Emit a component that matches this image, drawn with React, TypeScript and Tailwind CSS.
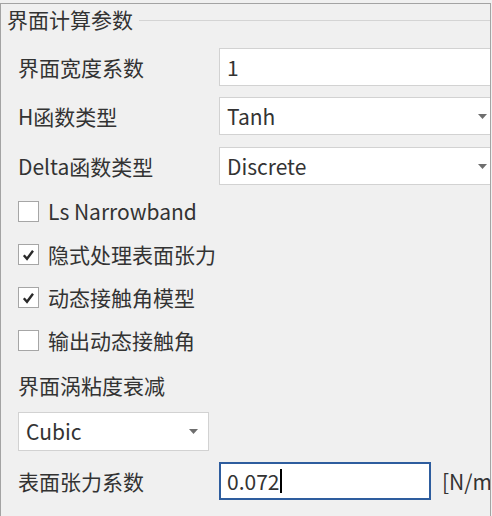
import React from "react";

const font = { fontFamily: '"Noto Sans CJK SC", "Noto Sans", sans-serif' };

function Arrow() {
  return (
    <svg width="9" height="5" viewBox="0 0 9 5" className="shrink-0">
      <path d="M0 0 L9 0 L4.5 5 Z" fill="#6e6e6e" />
    </svg>
  );
}

function Check({ checked }: { checked: boolean }) {
  return (
    <div className="w-[21px] h-[21px] border border-[#a6a6a6] bg-white flex items-center justify-center shrink-0">
      {checked && (
        <svg width="13" height="12" viewBox="0 0 13 12">
          <path d="M1.8 6.2 L5 9.8 L11 1.8" fill="none" stroke="#2a2a2a" strokeWidth="2.4" />
        </svg>
      )}
    </div>
  );
}

function FieldRow({
  label,
  value,
  select,
  mt,
}: {
  label: string;
  value: string;
  select?: boolean;
  mt: string;
}) {
  return (
    <div className={`flex items-center h-[38px] ${mt}`}>
      <div className="w-[201px] shrink-0">{label}</div>
      <div className="w-[290px] shrink-0 h-full bg-white border border-[#d2d2d2] flex items-center pl-[7px]">
        <span className="flex-1">{value}</span>
        {select && <Arrow />}
        {select && <div className="w-[21px] shrink-0" />}
      </div>
    </div>
  );
}

function CheckRow({ label, checked }: { label: string; checked: boolean }) {
  return (
    <div className="flex items-center h-[43px] gap-[9px]">
      <Check checked={checked} />
      <span>{label}</span>
    </div>
  );
}

export default function App() {
  return (
    <div
      className="w-[492px] h-[516px] bg-[#f0f0f0] overflow-hidden text-[21px] text-[#333333] leading-none"
      style={font}
    >
      <div className="mt-[3px] w-[491px] h-[513px] border-l border-t border-r border-[#a3a3a3] overflow-hidden">
        <div className="flex items-center h-[30px] pl-[6px]">
          <span className="leading-[26px]">界面计算参数</span>
          <div className="flex-1 h-px bg-[#d4d4d4] ml-[6px] mt-[3px]" />
        </div>
        <div className="pl-[17px]">
          <FieldRow label="界面宽度系数" value="1" mt="mt-[14px]" />
          <FieldRow label="H函数类型" value="Tanh" select mt="mt-[11px]" />
          <FieldRow label="Delta函数类型" value="Discrete" select mt="mt-[12px]" />
          <div className="mt-[5px]">
            <CheckRow label="Ls Narrowband" checked={false} />
            <CheckRow label="隐式处理表面张力" checked={true} />
            <CheckRow label="动态接触角模型" checked={true} />
            <CheckRow label="输出动态接触角" checked={false} />
          </div>
          <div className="h-[46px] flex items-center">界面涡粘度衰减</div>
          <div className="mt-[4px] w-[191px] h-[39px] bg-white border border-[#d2d2d2] flex items-center pl-[7px] pr-[10px]">
            <span className="flex-1">Cubic</span>
            <Arrow />
          </div>
          <div className="mt-[11px] flex items-center h-[38px]">
            <div className="w-[201px] shrink-0">表面张力系数</div>
            <div className="w-[212px] shrink-0 h-full bg-white border-2 border-[#2e5d9e] flex items-center pl-[6px]">
              <span>0.072</span>
              <span className="w-[2px] h-[24px] bg-black ml-[1px]" />
            </div>
            <span className="ml-[11px] whitespace-nowrap">[N/m]</span>
          </div>
        </div>
      </div>
    </div>
  );
}
